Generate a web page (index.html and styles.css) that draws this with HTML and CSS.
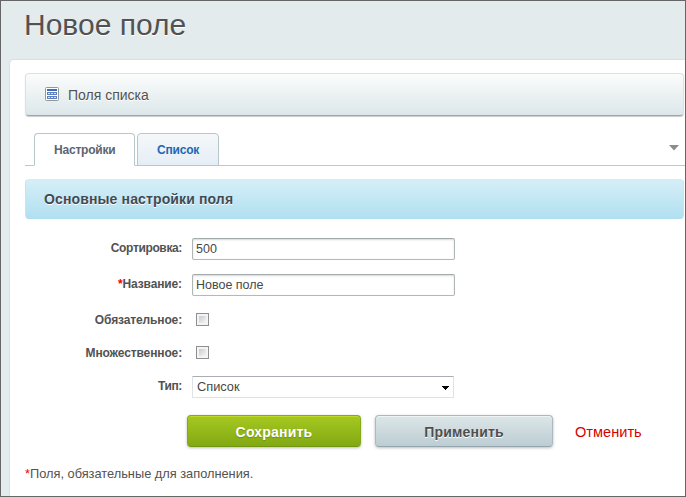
FILE: index.html
```html
<!DOCTYPE html>
<html lang="ru">
<head>
<meta charset="utf-8">
<title>Новое поле</title>
<link rel="stylesheet" href="styles.css">
</head>
<body>
<main class="page">
  <h1 class="title"><span>Новое поле</span></h1>
  <section class="panel">
    <div class="toolbar">
      <svg class="list-icon" width="14" height="14" viewBox="0 0 14 14">
        <rect x=".5" y=".5" width="13" height="13" rx="1" fill="#fff" stroke="#969696"/>
        <path fill="#416bb0" d="M2 2h10v2H2z"/>
        <path fill="#5c80c0" d="M2 5h10v3H2zM2 9h10v3H2z"/>
        <path fill="#dce6f6" d="M3 6h2v1H3zM6 6h2v1H6zM9 6h2v1H9zM3 10h2v1H3zM6 10h2v1H6zM9 10h2v1H9z"/>
      </svg>
      <span class="toolbar-text">Поля списка</span>
    </div>
    <nav class="tabs">
      <a class="tab active">Настройки</a>
      <a class="tab">Список</a>
      <svg class="tabs-arrow" width="10" height="6" viewBox="0 0 10 6"><path fill="#8c8c8c" d="M0 0h10L5 5.5z"/></svg>
    </nav>
    <h2 class="heading">Основные настройки поля</h2>
    <form class="form">
      <label class="label tight" for="sort">Сортировка:</label>
      <input class="input" id="sort" value="500">
      <label class="label" for="name"><i class="star">*</i>Название:</label>
      <input class="input" id="name" value="Новое поле">
      <label class="label" for="required">Обязательное:</label>
      <input class="check" id="required" type="checkbox">
      <label class="label" for="multiple">Множественное:</label>
      <input class="check" id="multiple" type="checkbox">
      <span class="label tight">Тип:</span>
      <div class="select">
        <span>Список</span>
        <svg width="7" height="4" viewBox="0 0 7 4" shape-rendering="crispEdges"><path d="M0 0h7v1H0zM1 1h5v1H1zM2 2h3v1H2zM3 3h1v1H3z"/></svg>
      </div>
    </form>
    <div class="actions">
      <button class="button save">Сохранить</button>
      <button class="button apply">Применить</button>
      <a class="cancel">Отменить</a>
    </div>
    <p class="note"><i class="star">*</i>Поля, обязательные для заполнения.</p>
  </section>
</main>
</body>
</html>
```
FILE: styles.css
```css
* { box-sizing: border-box; }
body {
  margin: 0;
  font-family: "Liberation Sans", Arial, sans-serif;
  color: #525252;
}
.page {
  width: 686px;
  height: 497px;
  border: 1px solid #666;
  background: #e3ebec;
  overflow: hidden;
  display: flex;
  flex-direction: column;
}
.title {
  margin: 0;
  height: 58px;
  flex: none;
  padding: 6px 0 0 23px;
  font-size: 30px;
  line-height: 36px;
  font-weight: 400;
  text-shadow: 0 1px #fff;
}
.panel {
  flex: 1;
  margin-left: 8px;
  padding: 13px 1px 0 15px;
  border: solid #d8e0e3;
  border-width: 1px 0 0 1px;
  border-radius: 5px 0 0 0;
  background: #fff;
}
.toolbar {
  height: 43px;
  display: flex;
  align-items: center;
  padding-left: 19px;
  border: 1px solid #dde1e3;
  border-bottom: 1px solid #9ea5a8;
  border-radius: 4px;
  background: linear-gradient(#fbfcfc, #dce7ea);
  box-shadow: 0 1px 1px #ccc;
}
.list-icon { margin-top: -1px; }
.toolbar-text {
  margin: 1px 0 0 9px;
  font-size: 14px;
  line-height: 16px;
  text-shadow: 0 1px #fff;
}
.tabs {
  height: 33px;
  margin: 17px -1px 0 0;
  padding-left: 9px;
  display: flex;
  gap: 2px;
  background: linear-gradient(#b9cacd, #b9cacd) bottom / 100% 1px no-repeat;
}
.tab {
  width: 82px;
  height: 33px;
  padding: 9px 0 0 19px;
  border: 1px solid #b5c8cc;
  border-radius: 4px 4px 0 0;
  background: linear-gradient(#f5f8fa, #e5edf5);
  color: #2267b5;
  font-size: 12px;
  line-height: 14px;
  font-weight: 700;
  letter-spacing: -0.2px;
}
.tab.active {
  width: 101px;
  background: #fff;
  border-bottom-color: #fff;
  color: #5c6470;
}
.tabs-arrow { margin: 12px 6px 0 auto; }
.heading {
  margin: 13px 0 0;
  height: 40px;
  padding: 11px 0 0 18px;
  border: 1px solid #c3e5f0;
  border-top-color: #d5ecf4;
  border-bottom-color: #aedeee;
  border-radius: 4px;
  background: linear-gradient(#d5eef7, #b1e0f1);
  font-size: 14px;
  line-height: 16px;
  letter-spacing: 0.13px;
  color: #3f4b54;
  text-shadow: 0 1px #fff;
}
.form {
  display: grid;
  grid-template-columns: 157px 263px;
  grid-template-rows: 36px 36px 33px 33px 24px;
  column-gap: 10px;
  padding-top: 19px;
}
.label {
  padding-top: 3px;
  font-size: 12px;
  line-height: 14px;
  font-weight: 700;
  text-align: right;
  white-space: nowrap;
  letter-spacing: -0.13px;
}
.label.tight { letter-spacing: -0.36px; }
.star {
  color: #f00000;
  font-style: normal;
}
.input {
  height: 22px;
  margin: 0;
  padding: 0 3px;
  border: 1px solid;
  border-color: #a4a9ab #b0b5b6 #b4b8ba;
  border-radius: 2px;
  box-shadow: inset 0 1px 2px #d4d7d9;
  color: #484848;
  font: 12.5px "Liberation Sans", Arial, sans-serif;
}
.check {
  appearance: none;
  width: 13px;
  height: 13px;
  margin: 3px 0 0 4px;
  border: 1px solid #8e8f8f;
  background: linear-gradient(135deg, #c6cbd3, #f5f5f5) content-box, #f4f4f4;
  padding: 2px;
}
.select {
  width: 262px;
  height: 22px;
  display: flex;
  align-items: center;
  justify-content: space-between;
  padding: 0 4px;
  border: 1px solid #e0e2e9;
  border-top-color: #aaadb2;
  border-radius: 1px;
  font-size: 12.8px;
  line-height: 14px;
  color: #484848;
}
.select span { margin-top: -1px; }
.select svg { margin-top: 2px; }
.actions {
  display: flex;
  padding: 15px 0 0 162px;
}
.button {
  height: 32px;
  padding: 1px 0 0;
  border-radius: 4px;
  font: 700 14px "Liberation Sans", Arial, sans-serif;
  letter-spacing: 0.2px;
}
.save {
  width: 174px;
  margin-right: 14px;
  border: 1px solid #85a91b;
  border-bottom-color: #719511;
  background: linear-gradient(#a6c820, #82a914);
  color: #fff;
  box-shadow: inset 0 1px #bddb28, 0 1px 3px #bbb;
  text-shadow: 0 1px 1px #6f9010;
}
.apply {
  width: 178px;
  border: 1px solid #a9b9bf;
  border-bottom-color: #94a5ac;
  background: linear-gradient(#dce6e8, #bdcdd3);
  color: #4f4f4f;
  box-shadow: inset 0 1px #eff4f4, 0 1px 3px #bbb;
  text-shadow: 0 1px #fff;
}
.cancel {
  margin: 9px 0 0 22px;
  font-size: 14.6px;
  line-height: 16px;
  color: #d60000;
}
.note {
  margin: 20px 0 0;
  font-size: 12.8px;
  line-height: 14px;
}
```
